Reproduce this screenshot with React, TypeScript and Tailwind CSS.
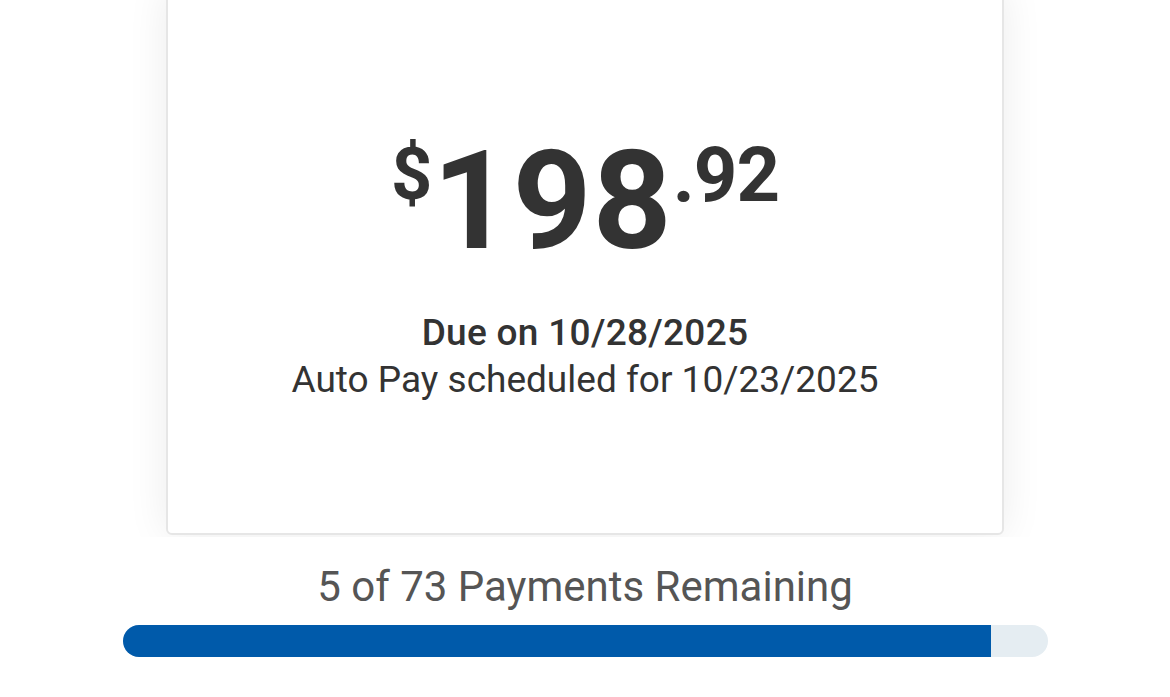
import React from 'react';

const App: React.FC = () => {
  const total = 73;
  const remaining = 5;
  // filled portion of the track, as the app draws it
  const pct = 93.85;

  return (
    <div className="flex h-[697px] w-full flex-col items-center overflow-hidden bg-white font-['Roboto',sans-serif] text-[#333]">
      <div className="-mt-[12px] overflow-hidden px-[50px] pb-[2px]">
        <div className="flex h-[547px] w-[838px] flex-col items-center rounded-md border-2 border-[#e6e6e6] bg-white shadow-[0_0_40px_rgba(0,0,0,0.08)]">
          <div className="mt-[140px] flex h-[128px] items-start font-bold leading-none">
            <span className="mt-[9px] text-[72px]">$</span>
            <span className="mt-[7px] text-[138px] leading-[128px] tracking-[1px]">198</span>
            <span className="mt-[7px] text-[76px] tracking-[-1px]">.92</span>
          </div>
          <div className="mt-[51px] text-[37px] font-medium leading-[47px] tracking-[0.3px]">Due on 10/28/2025</div>
          <div className="text-[37px] leading-[47px]">Auto Pay scheduled for 10/23/2025</div>
        </div>
      </div>
      <div className="mt-[22px] text-[42px] leading-[56px] text-[#555]">
        {remaining} of {total} Payments Remaining
      </div>
      <div className="mt-[10px] h-[32px] w-[925px] overflow-hidden rounded-full bg-[#e5edf2]">
        <div className="h-full bg-[#005aaa]" style={{ width: `${pct}%` }} />
      </div>
    </div>
  );
};

export default App;
